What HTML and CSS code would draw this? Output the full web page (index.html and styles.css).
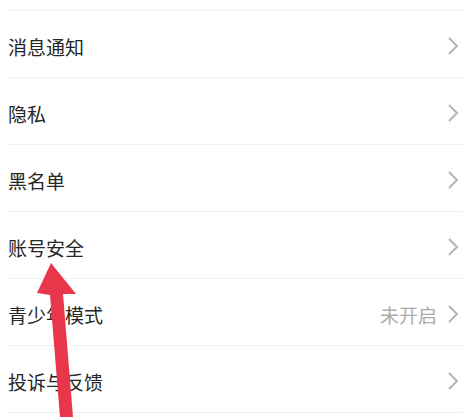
FILE: index.html
```html
<!DOCTYPE html>
<html lang="zh-CN">
<head>
    <meta charset="UTF-8">
    <meta name="viewport" content="width=device-width, initial-scale=1.0">
    <title>设置</title>
    <link rel="stylesheet" href="styles.css">
</head>
<body>
    <main class="settings">
        <div class="stub"></div>
        <ul class="menu">
            <li class="row">
                <span class="label">消息通知</span>
                <span class="right"><svg class="chev" viewBox="0 0 12 20"><path d="M2 2 L10 10 L2 18"/></svg></span>
            </li>
            <li class="row">
                <span class="label">隐私</span>
                <span class="right"><svg class="chev" viewBox="0 0 12 20"><path d="M2 2 L10 10 L2 18"/></svg></span>
            </li>
            <li class="row">
                <span class="label">黑名单</span>
                <span class="right"><svg class="chev" viewBox="0 0 12 20"><path d="M2 2 L10 10 L2 18"/></svg></span>
            </li>
            <li class="row">
                <span class="label">账号安全</span>
                <span class="right"><svg class="chev" viewBox="0 0 12 20"><path d="M2 2 L10 10 L2 18"/></svg></span>
            </li>
            <li class="row">
                <span class="label">青少年模式</span>
                <span class="right"><span class="value">未开启</span><svg class="chev" viewBox="0 0 12 20"><path d="M2 2 L10 10 L2 18"/></svg></span>
            </li>
            <li class="row">
                <span class="label">投诉与反馈</span>
                <span class="right"><svg class="chev" viewBox="0 0 12 20"><path d="M2 2 L10 10 L2 18"/></svg></span>
            </li>
            <li class="row row-end"></li>
        </ul>
    </main>

    <!-- annotation arrow drawn over the list -->
    <svg class="arrow" width="472" height="417" viewBox="0 0 472 417">
        <polygon points="51,263 37,293 50,295 60,417 73,417 63,294 76,294"/>
    </svg>
</body>
</html>
```

FILE: styles.css
```css
/* General */
html, body {
    margin: 0;
    padding: 0;
    background: #fff;
    overflow: hidden;
}

body {
    font-family: "Noto Sans CJK SC", "Noto Sans", sans-serif;
    color: #262626;
    position: relative;
    width: 472px;
    height: 417px;
}

.settings {
    margin: 0 10px 0 8px;
}

.stub {
    height: 10px;
}

/* Menu rows */
.menu {
    list-style: none;
    margin: 0;
    padding: 0;
}

.row {
    display: flex;
    align-items: center;
    justify-content: space-between;
    height: 66px;
    border-top: 1px solid #efefef;
    padding: 2px 3px 0 0;
    box-sizing: content-box;
    margin-top: -2px;
}

.row:first-child {
    margin-top: 0;
}

.row-end {
    height: 2px;
}

.label {
    font-size: 19px;
    line-height: 1;
}

.right {
    display: flex;
    align-items: center;
    gap: 10px;
}

.value {
    font-size: 19px;
    line-height: 1;
    color: #ababab;
}

.chev {
    width: 12px;
    height: 20px;
    fill: none;
    stroke: #b4b4b4;
    stroke-width: 2;
}

/* Red arrow */
.arrow {
    position: absolute;
    left: 0;
    top: 0;
    pointer-events: none;
}

.arrow polygon {
    fill: #e8374a;
}
```
